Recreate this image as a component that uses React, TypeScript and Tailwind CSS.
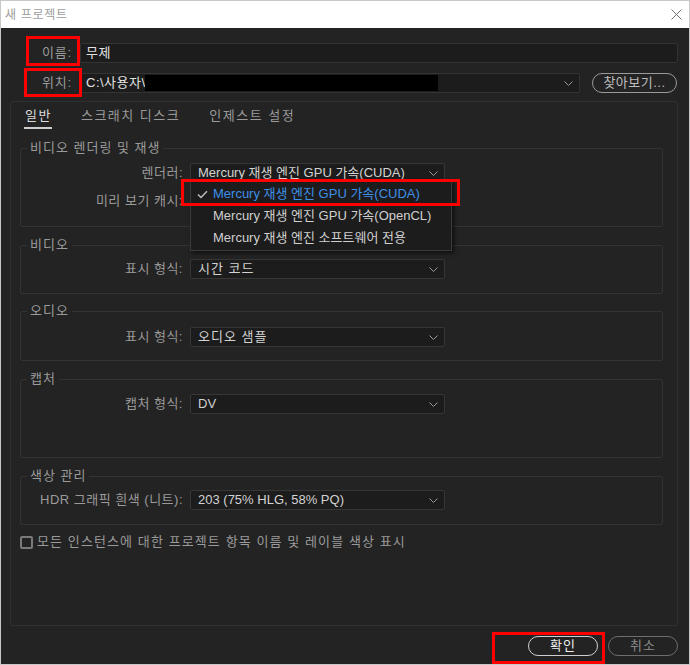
import type { ReactNode } from "react";

function Chevron() {
  return (
    <svg width="9" height="5" viewBox="0 0 9 5" className="shrink-0">
      <path d="M0.5 0.5 L4.5 4.5 L8.5 0.5" fill="none" stroke="#9a9a9a" strokeWidth="1" />
    </svg>
  );
}

function Select({ value, wide, className = "" }: { value: string; wide?: boolean; className?: string }) {
  return (
    <div
      className={`flex h-[20px] items-center justify-between rounded-[2px] border border-[#363636] bg-[#1c1c1c] pl-[7px] pr-[6px] text-[13px] leading-[16px] text-[#d2d2d2] ${className}`}
    >
      <span className={wide ? "whitespace-nowrap tracking-[1px]" : "whitespace-nowrap"}>{value}</span>
      <Chevron />
    </div>
  );
}

function Row({ label, value, wide, children }: { label: string; value: string; wide?: boolean; children?: ReactNode }) {
  return (
    <div className="relative flex items-center">
      <span className="w-[162px] whitespace-nowrap text-right text-[13px] leading-[16px] tracking-[0.5px] text-[#9a9a9a]">{label}</span>
      <Select value={value} wide={wide} className="ml-[7px] w-[255px]" />
      {children}
    </div>
  );
}

function Group({ title, className = "", children }: { title: string; className?: string; children: ReactNode }) {
  return (
    <fieldset className={`ml-[9px] mr-[14px] rounded-[2px] border border-[#333333] ${className}`}>
      <legend className="ml-[6px] px-[3px] text-[13px] leading-[16px] tracking-[1px] text-[#9a9a9a]">{title}</legend>
      {children}
    </fieldset>
  );
}

const menuItems = [
  "Mercury 재생 엔진 GPU 가속(CUDA)",
  "Mercury 재생 엔진 GPU 가속(OpenCL)",
  "Mercury 재생 엔진 소프트웨어 전용",
];

export default function App() {
  return (
    <div className="relative flex h-[665px] w-[690px] flex-col border border-[#c8c8c8] bg-[#232323] font-['Liberation_Sans','Noto_Sans_CJK_KR',sans-serif]">
      {/* title bar */}
      <div className="flex h-[27px] shrink-0 items-center justify-between bg-white pl-[4px] pr-[7px]">
        <span className="text-[12px] tracking-[0.7px] text-[#9c9c9c]">새 프로젝트</span>
        <svg width="11" height="11" viewBox="0 0 11 11">
          <path d="M0.5 0.5 L10.5 10.5 M10.5 0.5 L0.5 10.5" stroke="#707070" strokeWidth="1" />
        </svg>
      </div>

      <div className="flex flex-1 flex-col pl-[9px] pr-[11px] pt-[15px]">
        {/* name */}
        <div className="flex items-center">
          <span className="w-[62px] text-right text-[13px] leading-[16px] tracking-[0.8px] text-[#9a9a9a]">이름:</span>
          <div className="ml-[8px] flex h-[20px] flex-1 items-center rounded-[2px] border border-[#333333] bg-[#1c1c1c] pl-[5px] text-[13px] tracking-[0.5px] text-[#e2e2e2]">
            무제
          </div>
        </div>

        {/* location */}
        <div className="mt-[10px] flex items-center">
          <span className="w-[62px] text-right text-[13px] leading-[16px] tracking-[0.8px] text-[#9a9a9a]">위치:</span>
          <div className="relative ml-[8px] flex h-[20px] w-[500px] items-center justify-between rounded-[2px] border border-[#333333] bg-[#1c1c1c] pl-[5px] pr-[6px] text-[13px] text-[#e2e2e2]">
            <span className="tracking-[0.5px]">C:\사용자\</span>
            <Chevron />
            <div className="absolute left-[64px] top-[1px] h-[16px] w-[293px] bg-black" />
          </div>
          <button className="ml-[12px] h-[20px] w-[85px] rounded-full border border-[#9a9a9a] text-[13px] leading-[16px] tracking-[0.5px] text-[#bdbdbd]">
            찾아보기...
          </button>
        </div>

        {/* main panel */}
        <div className="mt-[8px] flex h-[525px] flex-col rounded-[2px] border border-[#303030]">
          <div className="mt-[6px] flex gap-[29px] pl-[13px] text-[13px] leading-[16px] tracking-[1.5px]">
            <span className="border-b-2 border-[#cfcfcf] pb-[3px] pl-px text-[#dcdcdc]">일반</span>
            <span className="pb-[3px] text-[#9a9a9a]">스크래치 디스크</span>
            <span className="pb-[3px] text-[#9a9a9a]">인제스트 설정</span>
          </div>

          <Group title="비디오 렌더링 및 재생" className="mt-[11px] pb-[15px] pt-[7px]">
            <Row label="렌더러:" value="Mercury 재생 엔진 GPU 가속(CUDA)">
              <div className="absolute left-[169px] top-[18px] z-10 w-[262px] border border-[#3a3a3a] bg-[#1c1c1c] py-px shadow-[2px_2px_4px_rgba(0,0,0,0.6)]">
                {menuItems.map((item, i) => (
                  <div key={item} className="flex h-[22px] items-center text-[13px]">
                    <span className="flex w-[22px] justify-center pl-[1px]">
                      {i === 0 && (
                        <svg width="11" height="9" viewBox="0 0 11 9">
                          <path d="M1 4.5 L4 7.5 L10 1.2" fill="none" stroke="#bdbdbd" strokeWidth="1.5" />
                        </svg>
                      )}
                    </span>
                    <span className={i === 0 ? "text-[#3d8fe8]" : "text-[#cfcfcf]"}>{item}</span>
                  </div>
                ))}
              </div>
            </Row>
            <div className="mt-[8px]">
              <Row label="미리 보기 캐시:" value="" />
            </div>
          </Group>

          <Group title="비디오" className="mt-[10px] pb-[14px] pt-[6px]">
            <Row label="표시 형식:" value="시간 코드" wide />
          </Group>

          <Group title="오디오" className="mt-[9px] pb-[13px] pt-[8px]">
            <Row label="표시 형식:" value="오디오 샘플" wide />
          </Group>

          <Group title="캡처" className="mt-[10px] pb-[43px] pt-[7px]">
            <Row label="캡처 형식:" value="DV" />
          </Group>

          <Group title="색상 관리" className="mt-[10px] pb-[14px] pt-[6px]">
            <Row label="HDR 그래픽 흰색 (니트):" value="203 (75% HLG, 58% PQ)" />
          </Group>

          <div className="ml-[9px] mt-[9px] flex items-center gap-[4px] text-[13px] leading-[16px] text-[#9a9a9a]">
            <span className="h-[13px] w-[13px] rounded-[2px] border-2 border-[#7a7a7a]" />
            <span className="tracking-[1.1px]">모든 인스턴스에 대한 프로젝트 항목 이름 및 레이블 색상 표시</span>
          </div>
        </div>

        {/* buttons */}
        <div className="mt-[10px] flex justify-end gap-[10px]">
          <button className="h-[20px] w-[70px] rounded-full border border-[#cfcfcf] text-[13px] leading-[16px] tracking-[1px] text-[#f0f0f0]">
            확인
          </button>
          <button className="h-[20px] w-[70px] rounded-full border border-[#6e6e6e] text-[13px] leading-[16px] tracking-[1px] text-[#8a8a8a]">
            취소
          </button>
        </div>
      </div>

      {/* red annotation boxes */}
      <div className="pointer-events-none absolute left-[25px] top-[35px] h-[30px] w-[54px] border-[3px] border-[#ff0000]" />
      <div className="pointer-events-none absolute left-[23px] top-[67px] h-[29px] w-[58px] border-[3px] border-[#ff0000]" />
      <div className="pointer-events-none absolute left-[180px] top-[178px] z-20 h-[27px] w-[279px] border-[3px] border-[#ff0000]" />
      <div className="pointer-events-none absolute left-[491px] top-[631px] h-[32px] w-[113px] border-[3px] border-[#ff0000]" />
    </div>
  );
}
